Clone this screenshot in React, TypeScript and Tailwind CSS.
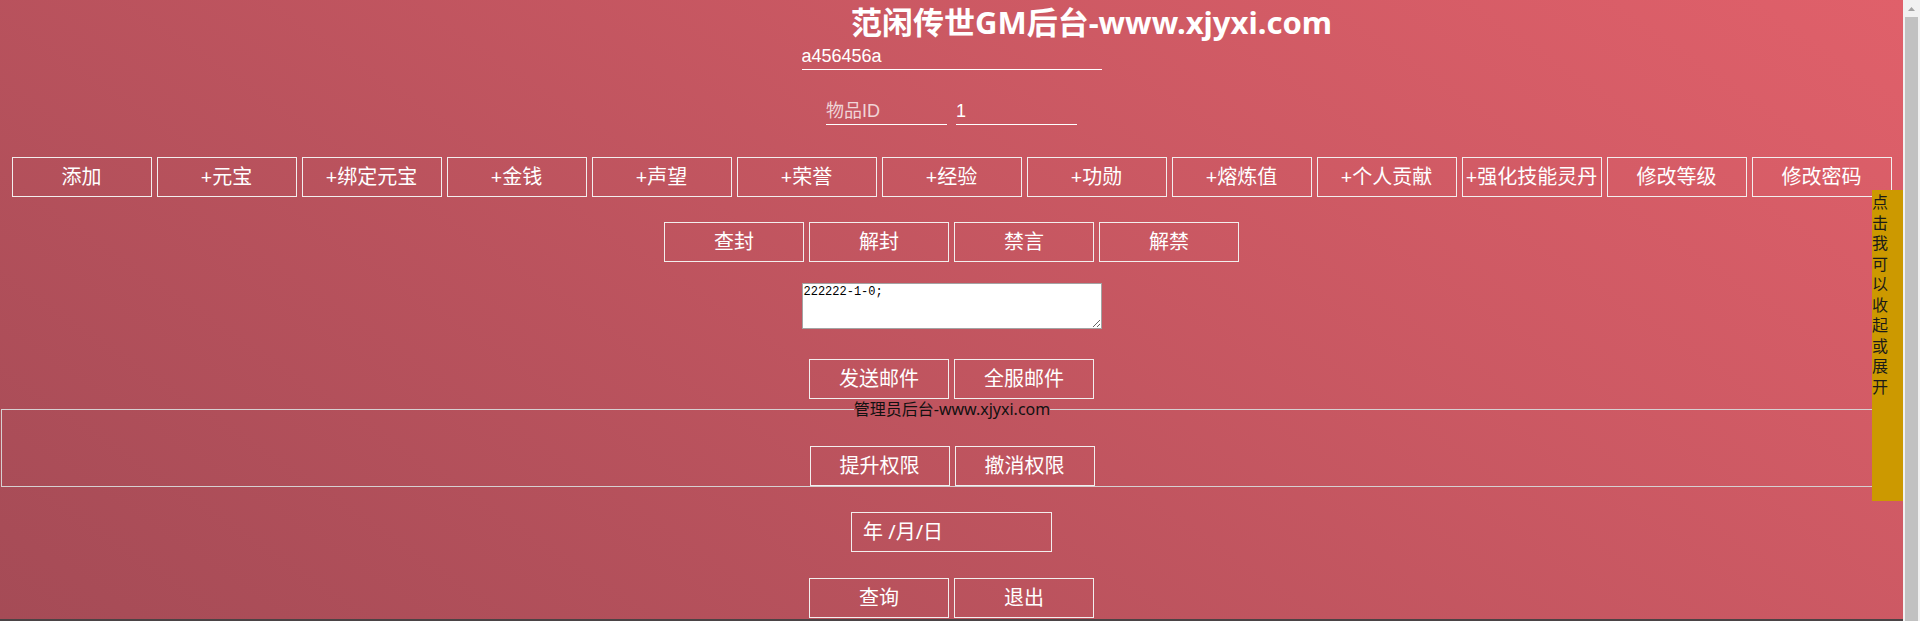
import React from 'react';

const row1 = ['添加', '+元宝', '+绑定元宝', '+金钱', '+声望', '+荣誉', '+经验', '+功勋', '+熔炼值', '+个人贡献', '+强化技能灵丹', '修改等级', '修改密码'];
const row2 = ['查封', '解封', '禁言', '解禁'];
const tabText = '点击我可以收起或展开';

const font = "font-['Noto_Sans','Noto_Sans_CJK_SC',sans-serif]";

const Btn: React.FC<{ label: string }> = ({ label }) => (
    <button
        type="button"
        className={`flex h-[40px] w-[140px] items-center justify-center border border-[#f3eeee] text-[20px] leading-none text-white ${font}`}
    >
        {label}
    </button>
);

export default function App() {
    return (
        <div className="flex h-[621px] w-full overflow-hidden">
            <div className="relative flex h-full min-w-0 flex-1 flex-col items-center overflow-hidden bg-[linear-gradient(34deg,#a54b56,#e0606a)]">
                <h1
                    className={`h-[44px] self-stretch pl-[280px] text-center text-[31px] font-bold leading-[44px] text-white ${font}`}
                >
                    范闲传世GM后台-www.xjyxi.com
                </h1>

                <input
                    defaultValue="a456456a"
                    className="h-[26px] w-[300px] border-b border-white bg-transparent text-[18px] text-white outline-none font-['Liberation_Sans','Noto_Sans_CJK_SC',sans-serif]"
                />

                <div className="mt-[29px] flex gap-[9px]">
                    <input
                        placeholder="物品ID"
                        className="h-[26px] w-[121px] border-b border-white bg-transparent text-[18px] text-white outline-none placeholder:text-white/75 font-['Liberation_Sans','Noto_Sans_CJK_SC',sans-serif]"
                    />
                    <input
                        defaultValue="1"
                        className="h-[26px] w-[121px] border-b border-white bg-transparent text-[18px] text-white outline-none font-['Liberation_Sans','Noto_Sans_CJK_SC',sans-serif]"
                    />
                </div>

                <div className="mt-[32px] flex gap-[5px]">
                    {row1.map((label) => (
                        <Btn key={label} label={label} />
                    ))}
                </div>

                <div className="mt-[25px] flex gap-[5px]">
                    {row2.map((label) => (
                        <Btn key={label} label={label} />
                    ))}
                </div>

                <textarea
                    defaultValue="222222-1-0;"
                    className="mt-[21px] h-[46px] w-[300px] border border-[#a3a3a3] bg-white p-[1px] text-[12px] leading-[14px] text-black outline-none font-['Liberation_Mono',monospace]"
                />

                <div className="mt-[30px] flex gap-[5px]">
                    <Btn label="发送邮件" />
                    <Btn label="全服邮件" />
                </div>

                <fieldset className="mt-[1px] ml-[1px] self-stretch border border-[#d6d0d1]">
                    <legend className={`mx-auto text-[16px] leading-[19px] text-[#111] ${font}`}>
                        管理员后台-www.xjyxi.com
                    </legend>
                    <div className="mt-[27px] flex justify-center gap-[5px]">
                        <Btn label="提升权限" />
                        <Btn label="撤消权限" />
                    </div>
                </fieldset>

                <div
                    className={`mt-[25px] flex h-[40px] w-[201px] items-center border border-[#f3eeee] px-[11px] text-[20px] text-white ${font}`}
                >
                    年 /月/日
                </div>

                <div className="mt-[26px] flex gap-[5px]">
                    <Btn label="查询" />
                    <Btn label="退出" />
                </div>

                <div className="mt-[1px] h-[2px] w-full shrink-0 bg-[#4a4345]" />

                <div className="absolute right-0 top-[190px] h-[311px] w-[31px] bg-[#cc9900] pt-[2px]">
                    <div className={`w-[17px] break-all text-[16px] leading-[20.5px] text-[#1a1a1a] ${font}`}>
                        {tabText}
                    </div>
                </div>
            </div>

            <div className="flex h-full w-[17px] shrink-0 flex-col bg-[#f1f1f1]">
                <div className="flex h-[17px] items-center justify-center">
                    <svg width="7" height="4" viewBox="0 0 7 4">
                        <path d="M0 4 L3.5 0 L7 4 Z" fill="#a3a3a3" />
                    </svg>
                </div>
                <div className="mx-[2px] flex-1 bg-[#c1c1c1]" />
            </div>
        </div>
    );
}
